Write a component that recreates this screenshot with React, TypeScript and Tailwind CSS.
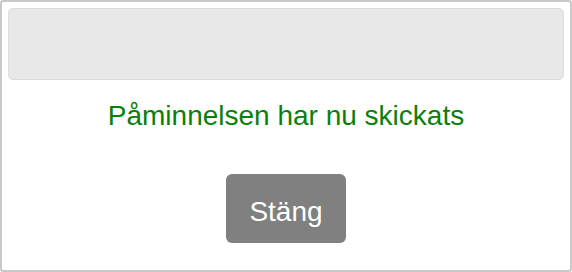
export default function App() {
  return (
    <div className="h-[272px] w-[572px] bg-white font-['Liberation_Sans',Arial,sans-serif]">
      <div className="flex h-full w-full flex-col items-center rounded-[3px] border-2 border-[#c8c8c8] px-[6px] pt-[6px]">
        <div className="h-[72px] w-full rounded-[5px] border border-[#dcdcdc] bg-[#e8e8e8]" />
        <div className="mt-[16px] text-[28px] leading-[40px] text-[#0a800a]">
          Påminnelsen har nu skickats
        </div>
        <button
          type="button"
          className="mt-[38px] h-[69px] w-[120px] rounded-[6px] bg-[#808080] pt-[6px] text-[28px] text-white"
        >
          Stäng
        </button>
      </div>
    </div>
  );
}
